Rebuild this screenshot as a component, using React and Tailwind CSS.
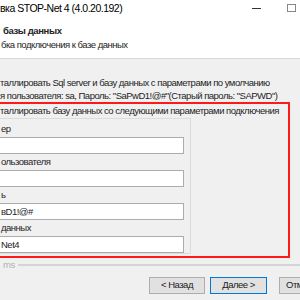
export default function App() {
  const field = (label, value) => (
    <div>
      <div className="h-[16px] leading-[16px] pl-[1px]">{label}</div>
      <div className="h-[17px] w-[184px] bg-white border border-[#acacac] border-l-0 leading-[15px] pl-[1px]">
        {value}
      </div>
    </div>
  );

  return (
    <div className="w-[300px] h-[300px] overflow-hidden bg-[#f0f0f0] text-[9.5px] tracking-[-0.5px] text-[#1e1e1e] whitespace-nowrap" style={{ fontFamily: '"Liberation Sans", Arial, sans-serif' }}>
      {/* header */}
      <div className="h-[59px] bg-white border-b border-[#d8d8d8] relative">
        <div className="pt-[1px] text-[10.5px] text-black leading-[14px]">вка STOP-Net 4 (4.0.20.192)</div>
        <div className="absolute left-[252px] top-[8px] w-[9px] h-[1px] bg-[#333]" />
        <div className="absolute left-[287px] top-[4px] w-[9px] h-[8px] border border-[#888]" />
        <div className="mt-[9px] pl-[3px] font-bold leading-[14px] tracking-[-0.4px]">базы данных</div>
        <div className="leading-[14px] pl-[1px]">бка подключения к базе данных</div>
      </div>

      {/* options */}
      <div className="pt-[17px] leading-[13px]">
        <div>таллировать Sql server и базу данных с параметрами по умолчанию</div>
        <div>я пользователя: sa, Пароль: "SaPwD1!@#"(Старый пароль: "SAPWD")</div>
      </div>

      <div className="w-[290px] h-[156px] border-2 border-l-0 border-[#ff1a1a]">
        <div className="leading-[14px]">таллировать базу данных со следующими параметрами подключения</div>
        <div className="w-[191px] border-t border-r border-b border-[#dcdcdc] h-[136px] pt-[2px] flex flex-col">
          {field('ер', '')}
          {field('ользователя', '')}
          {field('ь', 'вD1!@#')}
          {field('данных', 'Net4')}
        </div>
      </div>

      {/* footer */}
      <div className="flex items-center mt-[1px] h-[12px]">
        <span className="pl-[3px] text-[#b0b0b0]">ms</span>
        <div className="flex-1 ml-[3px] h-[2px] bg-[#d4d4d4]" />
      </div>
      <div className="flex mt-[6px] pl-[149px] gap-[5px]">
        <div className="w-[56px] h-[17px] bg-[#e1e1e1] border border-[#adadad] flex items-center justify-center text-[#222] shrink-0">&lt; Назад</div>
        <div className="w-[57px] h-[17px] bg-[#e1e1e1] border border-[#0078d7] flex items-center justify-center text-[#222] shrink-0">Далее &gt;</div>
        <div className="ml-[7px] w-[60px] h-[17px] bg-[#e1e1e1] border border-[#adadad] flex items-center pl-[6px] text-[#222] shrink-0">Отмена</div>
      </div>
    </div>
  );
}
